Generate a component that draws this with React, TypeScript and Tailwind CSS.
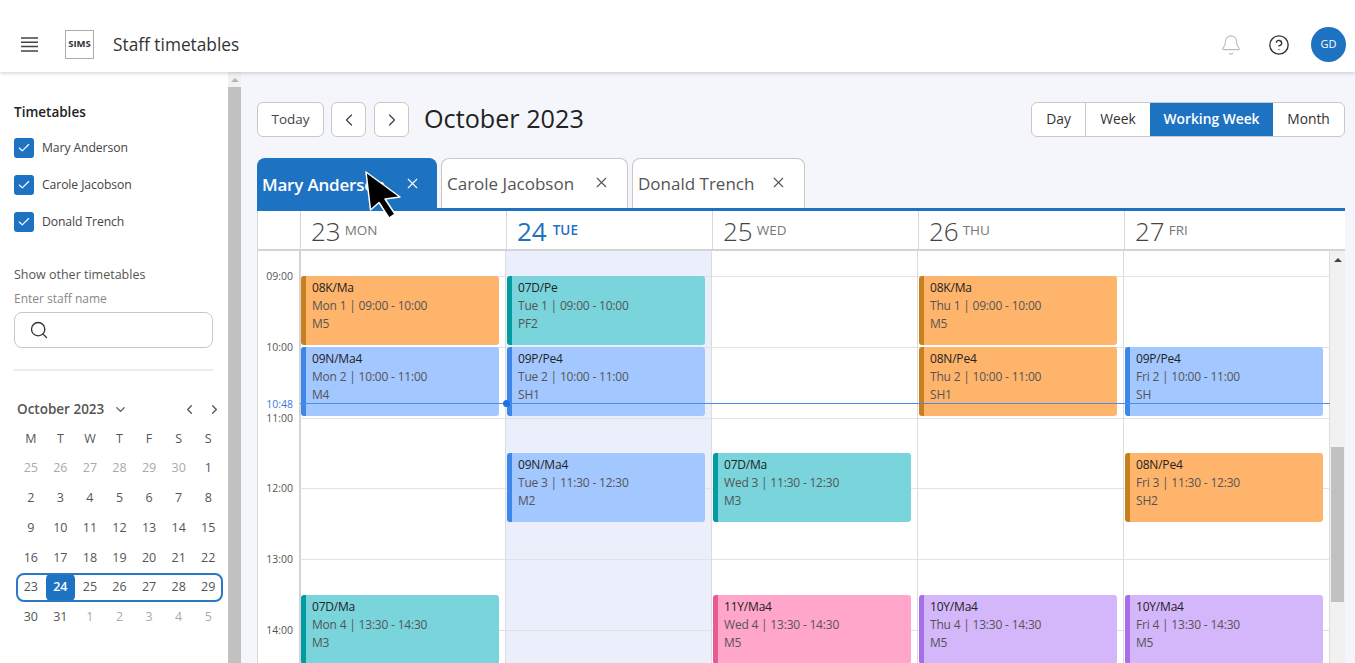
import { Bell, Check, ChevronDown, ChevronLeft, ChevronRight, CircleHelp, Search, X } from 'lucide-react'
import { clsx } from 'clsx'

type Colour = 'orange' | 'teal' | 'blue' | 'pink' | 'purple'

interface Lesson {
  day: number
  start: number
  title: string
  info: string
  room: string
  colour: Colour
}

const HOUR = 70.8
const FIRST_HOUR = 9
const GRID_TOP = 25

const colours: Record<Colour, string> = {
  orange: 'bg-[#ffb46b] border-[#c8801f]',
  teal: 'bg-[#79d4dc] border-[#009ca0]',
  blue: 'bg-[#a3c7ff] border-[#3d86ea]',
  pink: 'bg-[#ffa6ca] border-[#e55c95]',
  purple: 'bg-[#d4b6fb] border-[#a76eea]',
}

const days = [
  { num: '23', name: 'MON' },
  { num: '24', name: 'TUE', today: true },
  { num: '25', name: 'WED' },
  { num: '26', name: 'THU' },
  { num: '27', name: 'FRI' },
]

const lessons: Lesson[] = [
  { day: 0, start: 9, title: '08K/Ma', info: 'Mon 1 | 09:00 - 10:00', room: 'M5', colour: 'orange' },
  { day: 0, start: 10, title: '09N/Ma4', info: 'Mon 2 | 10:00 - 11:00', room: 'M4', colour: 'blue' },
  { day: 0, start: 13.5, title: '07D/Ma', info: 'Mon 4 | 13:30 - 14:30', room: 'M3', colour: 'teal' },
  { day: 1, start: 9, title: '07D/Pe', info: 'Tue 1 | 09:00 - 10:00', room: 'PF2', colour: 'teal' },
  { day: 1, start: 10, title: '09P/Pe4', info: 'Tue 2 | 10:00 - 11:00', room: 'SH1', colour: 'blue' },
  { day: 1, start: 11.5, title: '09N/Ma4', info: 'Tue 3 | 11:30 - 12:30', room: 'M2', colour: 'blue' },
  { day: 2, start: 11.5, title: '07D/Ma', info: 'Wed 3 | 11:30 - 12:30', room: 'M3', colour: 'teal' },
  { day: 2, start: 13.5, title: '11Y/Ma4', info: 'Wed 4 | 13:30 - 14:30', room: 'M5', colour: 'pink' },
  { day: 3, start: 9, title: '08K/Ma', info: 'Thu 1 | 09:00 - 10:00', room: 'M5', colour: 'orange' },
  { day: 3, start: 10, title: '08N/Pe4', info: 'Thu 2 | 10:00 - 11:00', room: 'SH1', colour: 'orange' },
  { day: 3, start: 13.5, title: '10Y/Ma4', info: 'Thu 4 | 13:30 - 14:30', room: 'M5', colour: 'purple' },
  { day: 4, start: 10, title: '09P/Pe4', info: 'Fri 2 | 10:00 - 11:00', room: 'SH', colour: 'blue' },
  { day: 4, start: 11.5, title: '08N/Pe4', info: 'Fri 3 | 11:30 - 12:30', room: 'SH2', colour: 'orange' },
  { day: 4, start: 13.5, title: '10Y/Ma4', info: 'Fri 4 | 13:30 - 14:30', room: 'M5', colour: 'purple' },
]

const hours = ['09:00', '10:00', '11:00', '12:00', '13:00', '14:00']

const monthRows = [
  ['25', '26', '27', '28', '29', '30', '1'],
  ['2', '3', '4', '5', '6', '7', '8'],
  ['9', '10', '11', '12', '13', '14', '15'],
  ['16', '17', '18', '19', '20', '21', '22'],
  ['23', '24', '25', '26', '27', '28', '29'],
  ['30', '31', '1', '2', '3', '4', '5'],
]

function Checkbox({ label }: { label: string }) {
  return (
    <div className="flex items-center gap-2 h-[21px]">
      <span className="w-5 h-5 rounded-[3px] bg-[#1e72c2] flex items-center justify-center">
        <Check size={14} strokeWidth={2} className="text-white" />
      </span>
      <span className="text-[12.2px] tracking-[-0.1px] text-[#444] mt-px">{label}</span>
    </div>
  )
}

function MiniCalendar() {
  return (
    <div className="pl-[16px] w-[222px]">
      <div className="flex items-center h-5 text-[#555]">
        <span className="text-[13.5px] font-semibold ml-px whitespace-nowrap">October 2023</span>
        <ChevronDown size={15} className="ml-[9px]" />
        <ChevronLeft size={15} className="ml-auto mr-[10px]" />
        <ChevronRight size={15} />
      </div>
      <div className="grid grid-cols-7 w-[207px] mt-[10px] text-center text-[12.5px] text-[#555]">
        {['M', 'T', 'W', 'T', 'F', 'S', 'S'].map((d, i) => (
          <div key={i} className="h-[25px] leading-[20px]">{d}</div>
        ))}
      </div>
      <div className="w-[207px]">
        {monthRows.map((row, r) => (
          <div
            key={r}
            className={clsx(
              'grid grid-cols-7 text-center text-[12.5px] h-[29.7px] items-center',
              r === 4 && 'outline-2 -outline-offset-2 outline-[#2a78c6] rounded-lg',
            )}
          >
            {row.map((d, i) => {
              const faded = (r === 0 && i < 6) || (r === 5 && i > 1)
              const selected = r === 4 && i === 1
              return (
                <div
                  key={i}
                  className={clsx(
                    'h-full flex items-center justify-center',
                    faded ? 'text-[#aaa]' : 'text-[#555]',
                    selected && 'bg-[#1e72c2] text-white font-semibold rounded-md',
                  )}
                >
                  {d}
                </div>
              )
            })}
          </div>
        ))}
      </div>
    </div>
  )
}

function Sidebar() {
  return (
    <aside className="w-[241px] shrink-0 flex bg-white">
      <div className="w-[228px] pt-[31px] overflow-hidden">
        <div className="pl-[14px] w-[213px]">
          <h2 className="text-[13.5px] font-semibold text-[#222] leading-[18px]">Timetables</h2>
          <div className="mt-[16px] flex flex-col gap-[16px]">
            <Checkbox label="Mary Anderson" />
            <Checkbox label="Carole Jacobson" />
            <Checkbox label="Donald Trench" />
          </div>
          <p className="mt-[34px] text-[12.5px] font-medium text-[#555] leading-[18px]">Show other timetables</p>
          <p className="mt-[7px] text-[12px] text-[#888] leading-[16px]">Enter staff name</p>
          <div className="mt-[5px] h-[36px] border border-[#c8c8c8] rounded-lg flex items-center pl-[14px]">
            <Search size={20} strokeWidth={1.6} className="text-[#333]" />
          </div>
          <div className="mt-[21px] h-[2px] bg-[#ececec]" />
        </div>
        <div className="mt-[28px]">
          <MiniCalendar />
        </div>
      </div>
      <div className="w-[13px] bg-[#c1c1c1]">
        <div className="h-[15px] bg-[#f1f1f1] flex justify-center pt-[6px]">
          <div className="w-0 h-0 border-x-[4px] border-x-transparent border-b-[4px] border-b-[#b5b5b5]" />
        </div>
      </div>
    </aside>
  )
}

function Toolbar() {
  const btn = 'h-[35px] bg-white border border-[#c8c8c8] rounded-md flex items-center justify-center text-[#444]'
  const views = ['Day', 'Week', 'Working Week', 'Month']
  return (
    <div className="flex items-center h-[35px]">
      <button className={clsx(btn, 'w-[67px] text-[13.5px]')}>Today</button>
      <button className={clsx(btn, 'w-[35px] ml-[7px]')}><ChevronLeft size={20} strokeWidth={1.5} /></button>
      <button className={clsx(btn, 'w-[35px] ml-[8px]')}><ChevronRight size={20} strokeWidth={1.5} /></button>
      <h1 className="ml-[15px] -mt-[2px] text-[25.2px] text-[#222]">October 2023</h1>
      <div className="ml-auto flex h-[35px] w-[314px] bg-white border border-[#c8c8c8] rounded-md overflow-hidden text-[13.8px] text-[#333]">
        {views.map(v => (
          <div
            key={v}
            className={clsx(
              'flex items-center justify-center',
              v === 'Day' && 'w-[54px] border-r border-[#c8c8c8]',
              v === 'Week' && 'w-[64px]',
              v === 'Working Week' && 'w-[123px] bg-[#1e72c2] text-white font-semibold',
              v === 'Month' && 'flex-1',
            )}
          >
            {v}
          </div>
        ))}
      </div>
    </div>
  )
}

function Tabs() {
  const tabs = [
    { name: 'Mary Anderson', w: 'w-[180px]', gap: '', x: 'ml-[19px]' },
    { name: 'Carole Jacobson', w: 'w-[187px]', gap: 'ml-[4px]', x: 'ml-[19px]' },
    { name: 'Donald Trench', w: 'w-[173px]', gap: 'ml-[4px]', x: 'ml-[16px]' },
  ]
  return (
    <div className="flex h-[53px] mt-[21px] border-b-[3px] border-[#1e72c2]">
      {tabs.map((t, i) => (
        <div
          key={t.name}
          className={clsx(
            'rounded-t-lg flex items-center pl-[5px] text-[17px]',
            t.w,
            t.gap,
            i === 0 ? 'bg-[#1e72c2] text-white font-semibold h-[53px] tracking-[-0.2px]' : 'h-[50px] bg-white text-[#555] border border-b-0 border-[#c8c8c8]',
          )}
        >
          <span>{t.name}</span>
          <X size={17} strokeWidth={1.6} className={clsx('-mt-[3px]', t.x)} />
        </div>
      ))}
    </div>
  )
}

function LessonCard({ lesson }: { lesson: Lesson }) {
  return (
    <div
      className={clsx('absolute left-px w-[198px] h-[69px] rounded-[3px] border-l-[5px] pl-[6px] pt-[3px] text-[12px] tracking-[-0.2px] leading-[18px]', colours[lesson.colour])}
      style={{ top: GRID_TOP + (lesson.start - FIRST_HOUR) * HOUR }}
    >
      <div className="text-[#222] font-medium">{lesson.title}</div>
      <div className="text-[#555]">{lesson.info}</div>
      <div className="text-[#555]">{lesson.room}</div>
    </div>
  )
}

function Timetable() {
  return (
    <div className="bg-white border-l border-[#d8d8d8] h-[452px] overflow-hidden">
      <div className="flex h-[40px] border-b-2 border-[#d4d4d4]">
        <div className="w-[43px] shrink-0 border-r border-[#d4d4d4]" />
        {days.map(d => (
          <div
            key={d.num}
            className={clsx(
              'w-[206px] shrink-0 border-r border-[#d8d8d8] last:border-r-0 last:flex-1 flex items-center pl-[10px]',
              d.today ? 'gap-[6px]' : 'gap-[4px]',
            )}
          >
            <span className={clsx('text-[26px] leading-none mt-[2px]', d.today ? 'text-[#1e72c2] font-medium' : 'text-[#444] font-light')}>{d.num}</span>
            <span className={clsx('text-[13.5px] mt-px', d.today ? 'text-[#1e72c2] font-semibold' : 'text-[#777]')}>{d.name}</span>
          </div>
        ))}
      </div>
      <div className="flex relative h-[412px]">
        <div className="w-[43px] shrink-0 border-r-2 border-[#d4d4d4] relative -mr-px">
          {hours.map((h, i) => (
            <span
              key={h}
              className="absolute right-[6px] text-[10.5px] leading-[14px] text-[#555]"
              style={{ top: GRID_TOP - 7 + i * HOUR }}
            >
              {h}
            </span>
          ))}
          <span className="absolute right-[6px] top-[146px] text-[10.5px] leading-[14px] text-[#3f78e0]">10:48</span>
        </div>
        {days.map((d, i) => (
          <div key={d.num} className={clsx('w-[206px] shrink-0 relative border-r border-[#dcdcdc]', d.today && 'bg-[#ebeffc]')}>
            {hours.map((h, j) => (
              <div key={h} className="absolute left-0 right-0 h-px bg-[#e2e2e2]" style={{ top: GRID_TOP + j * HOUR }} />
            ))}
            {lessons.filter(l => l.day === i).map(l => (
              <LessonCard key={l.title + l.start} lesson={l} />
            ))}
          </div>
        ))}
        {/* scrollbar */}
        <div className="flex-1 bg-[#f1f1f1] relative">
          <div className="absolute left-[4px] top-[7px] w-0 h-0 border-x-[4px] border-x-transparent border-b-[4px] border-b-[#444]" />
          <div className="absolute left-px right-px top-[196px] h-[155px] bg-[#c1c1c1]" />
        </div>
        {/* current time */}
        <div className="absolute z-10 left-[42px] right-[15px] top-[152px] h-px bg-[#4f8ae6]" />
        <div className="absolute z-10 left-[245px] top-[149px] w-[7px] h-[7px] rounded-full bg-[#1e72e0]" />
      </div>
    </div>
  )
}

function Cursor() {
  return (
    <svg className="absolute left-[362px] top-[169px]" width="42" height="54" viewBox="0 0 42 54">
      <path
        d="M4 3 L8.5 41 L17 33.5 L27 49 L33 45 L23 30 L38 28 Z"
        fill="#000"
        stroke="#fff"
        strokeWidth="1.5"
        strokeLinejoin="round"
      />
    </svg>
  )
}

function MenuIcon() {
  return (
    <svg width="17" height="15" viewBox="0 0 17 15" className="text-[#444]">
      <path d="M0 1h17M0 5.3h17M0 9.6h17M0 13.9h17" stroke="currentColor" strokeWidth="1.5" />
    </svg>
  )
}

export default function App() {
  return (
    <div className="relative w-[1355px] h-[663px] overflow-hidden bg-[#f5f6fb] font-['Open_Sans',sans-serif]">
      <header className="relative z-10 h-[72px] pt-[17px] bg-white shadow-[0_1px_4px_rgba(0,0,0,0.2)] flex items-center pl-[21px] pr-[9px]">
        <MenuIcon />
        <div className="ml-[27px] w-[29px] h-[29px] border border-[#aaa] flex items-center justify-center text-[9.5px] font-bold text-[#333]">
          SIMS
        </div>
        <span className="ml-[19px] text-[17.3px] text-[#333]">Staff timetables</span>
        <Bell size={22} strokeWidth={1.2} className="ml-auto text-[#bbb]" />
        <CircleHelp size={22} strokeWidth={1.5} className="ml-[26px] mt-px text-[#333]" />
        <div className="ml-[21px] w-[35px] h-[35px] rounded-full bg-[#1e72c2] text-white text-[11px] font-medium flex items-center justify-center">
          GD
        </div>
      </header>
      <div className="flex h-[591px]">
        <Sidebar />
        <main className="flex-1 pl-[16px] pr-[10px] pt-[30px]">
          <Toolbar />
          <Tabs />
          <Timetable />
        </main>
      </div>
      <Cursor />
    </div>
  )
}
